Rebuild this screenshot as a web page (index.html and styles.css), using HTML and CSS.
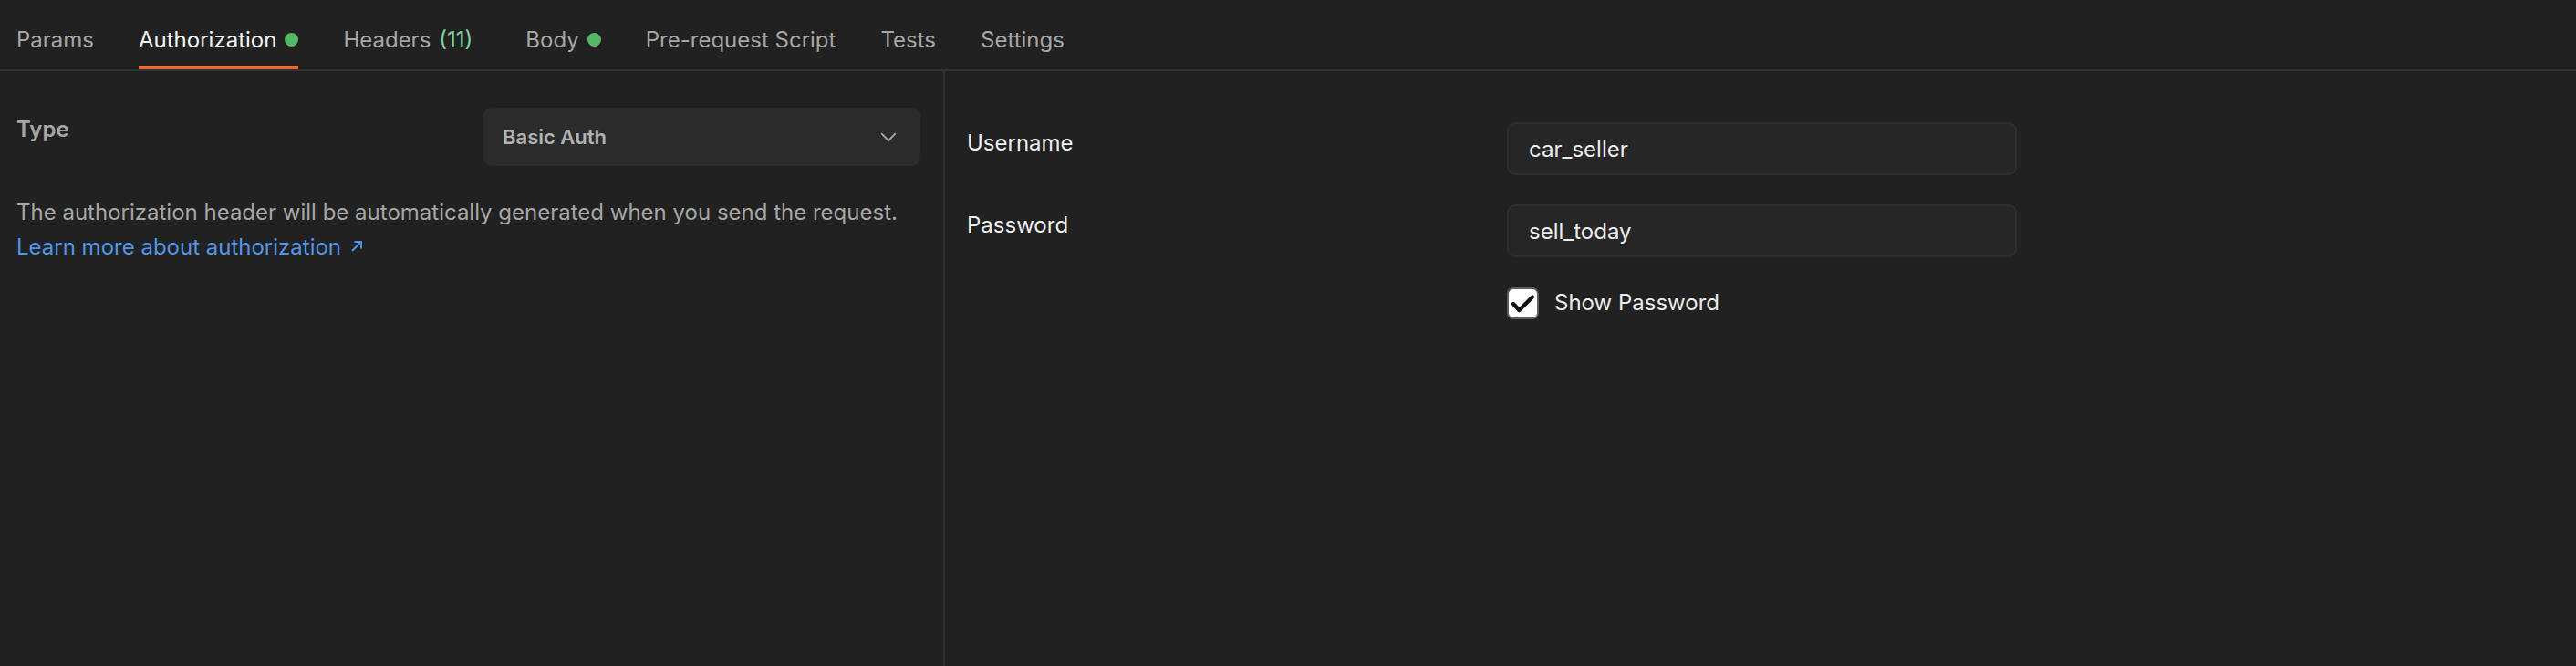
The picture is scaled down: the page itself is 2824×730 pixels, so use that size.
FILE: index.html
```html
<!DOCTYPE html>
<html lang="en">
<head>
<meta charset="utf-8">
<title>Authorization</title>
<link rel="stylesheet" href="styles.css">
</head>
<body>
<div class="app">
  <nav class="tabs">
    <div class="tab">Params</div>
    <div class="tab active">Authorization<span class="dot"></span></div>
    <div class="tab">Headers<span class="count">(11)</span></div>
    <div class="tab">Body<span class="dot"></span></div>
    <div class="tab">Pre-request Script</div>
    <div class="tab">Tests</div>
    <div class="tab">Settings</div>
  </nav>
  <main class="panes">
    <section class="pane-left">
      <div class="type-row">
        <div class="type-label">Type</div>
        <div class="select">
          <span class="select-value">Basic Auth</span>
          <svg class="chevron" width="18" height="11" viewBox="0 0 18 11"><polyline points="1.2,1.2 9,9.2 16.8,1.2" fill="none" stroke="#a8a8a8" stroke-width="1.9"/></svg>
        </div>
      </div>
      <p class="desc">The authorization header will be automatically generated when you send the request.</p>
      <a class="learn" href="#">Learn more about authorization<svg class="ext" width="14" height="14" viewBox="0 0 14 14"><path d="M2 12 L12 2 M4.5 2 H12 V9.5" fill="none" stroke="#5195e8" stroke-width="1.9"/></svg></a>
    </section>
    <section class="pane-right">
      <div class="form">
        <div class="label">Username</div>
        <div class="input">car_seller</div>
        <div class="label">Password</div>
        <div class="input">sell_today</div>
        <div class="spacer"></div>
        <label class="check">
          <span class="box"><svg width="35" height="35" viewBox="0 0 35 35"><polyline points="7,18 13.5,25 28,10.5" fill="none" stroke="#111" stroke-width="4.4" stroke-linecap="round" stroke-linejoin="round"/></svg></span>
          <span class="check-text">Show Password</span>
        </label>
      </div>
    </section>
  </main>
</div>
</body>
</html>
```
FILE: styles.css
```css
html, body {
  margin: 0;
  padding: 0;
  background: #212121;
  height: 100%;
}
body {
  font-family: Inter, "Noto Sans", sans-serif;
  font-size: 24px;
  color: #e8e8e8;
}
.app {
  display: flex;
  flex-direction: column;
  height: 730px;
}
.tabs {
  display: flex;
  gap: 49px;
  padding-left: 18px;
  height: 76px;
  border-bottom: 2px solid #323232;
  flex: none;
}
.tab {
  box-sizing: border-box;
  height: 76px;
  padding-top: 20px;
  line-height: 48px;
  border-bottom: 4px solid transparent;
  color: #a6a6a6;
  display: flex;
  align-items: flex-start;
  white-space: nowrap;
}
.tab.active {
  color: #f4f4f4;
  border-bottom-color: #ee6b3b;
}
.dot {
  width: 15px;
  height: 15px;
  border-radius: 50%;
  background: #55b866;
  margin-left: 9px;
  margin-top: 16px;
}
.count {
  color: #7fd19e;
  margin-left: 9px;
  margin-right: 9px;
}
.panes {
  flex: 1;
  display: flex;
}
.pane-left {
  box-sizing: border-box;
  width: 1036px;
  flex: none;
  border-right: 2px solid #303030;
  padding: 40px 0 0 18px;
}
.type-row {
  display: flex;
  align-items: flex-start;
}
.type-label {
  width: 512px;
  padding-top: 6px;
  line-height: 36px;
  font-weight: 600;
  color: #a6a6a6;
}
.select {
  box-sizing: border-box;
  width: 479px;
  height: 64px;
  background: #2b2b2b;
  border-radius: 9px;
  display: flex;
  align-items: center;
  justify-content: space-between;
  padding: 0 26px 0 21px;
}
.select-value {
  font-size: 22px;
  font-weight: 600;
  color: #b2b2b2;
  line-height: 30px;
}
.chevron {
  display: block;
  margin-top: 1px;
}
.desc {
  margin: 32px 0 0;
  line-height: 38px;
  color: #a6a6a6;
}
.learn {
  display: inline-flex;
  align-items: center;
  line-height: 38px;
  color: #5195e8;
  text-decoration: none;
}
.ext {
  margin-left: 10px;
  margin-top: -2px;
}
.pane-right {
  flex: 1;
  padding: 56px 0 0 24px;
}
.form {
  display: grid;
  grid-template-columns: 592px 559px;
  row-gap: 32px;
}
.label {
  padding-top: 5px;
  line-height: 36px;
  color: #eeeeee;
}
.input {
  box-sizing: border-box;
  height: 58px;
  border: 2px solid #2e2e2e;
  background: #262626;
  border-radius: 9px;
  padding: 0 22px;
  display: flex;
  align-items: center;
  color: #ececec;
}
.check {
  display: flex;
  align-items: center;
  gap: 17px;
}
.box {
  box-sizing: border-box;
  width: 35px;
  height: 35px;
  border-radius: 7px;
  background: #ffffff;
  border: 2px solid #5e5e5e;
  display: flex;
  align-items: center;
  justify-content: center;
  overflow: hidden;
}
.box svg {
  flex: none;
}
.check-text {
  color: #eaeaea;
  line-height: 36px;
}
```
